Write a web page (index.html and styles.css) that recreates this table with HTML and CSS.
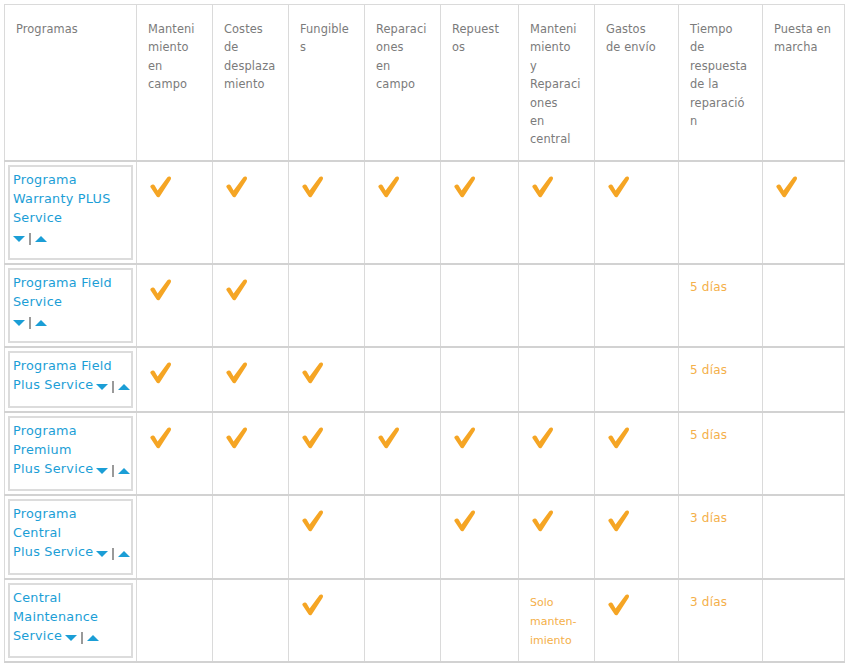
FILE: index.html
```html
<!DOCTYPE html>
<html lang="es">
<head>
<meta charset="utf-8">
<title>Programas</title>
<link rel="stylesheet" href="styles.css">
</head>
<body>
<svg width="0" height="0" class="defs">
  <defs>
    <symbol id="chk" viewBox="0 0 24 24">
      <path d="M1.8 10.4 C3.4 9 5.2 9.4 6 11 L8.6 15.4 L18.4 2.2 C19.4 0.9 21.6 1.3 22 2.8 C22.2 3.6 21.9 4.4 21.3 5.2 L10.8 21.4 C10 22.6 8.2 22.6 7.5 21.3 L1.7 12.6 C1.2 11.8 1.2 11 1.8 10.4 Z"/>
    </symbol>
  </defs>
</svg>
<table class="grid">
  <colgroup>
    <col class="c-prog"><col class="c76"><col class="c76"><col class="c76"><col class="c76"><col class="c78"><col class="c76"><col class="c84"><col class="c84"><col class="c82">
  </colgroup>
  <thead>
    <tr>
      <th>Programas</th>
      <th>Manteni<br>miento<br>en<br>campo</th>
      <th>Costes<br>de<br>desplaza<br>miento</th>
      <th>Fungible<br>s</th>
      <th>Reparaci<br>ones<br>en<br>campo</th>
      <th>Repuest<br>os</th>
      <th>Manteni<br>miento<br>y<br>Reparaci<br>ones<br>en<br>central</th>
      <th>Gastos<br>de envío</th>
      <th>Tiempo<br>de<br>respuesta<br>de la<br>reparació<br>n</th>
      <th>Puesta en<br>marcha</th>
    </tr>
  </thead>
  <tbody>
    <tr>
      <td class="prog"><div class="box"><a class="name">Programa<br>Warranty PLUS<br>Service</a><br><span class="arrows"><i class="dn"></i><i class="bar"></i><i class="up"></i></span></div></td>
      <td><svg class="ck"><use href="#chk"/></svg></td>
      <td><svg class="ck"><use href="#chk"/></svg></td>
      <td><svg class="ck"><use href="#chk"/></svg></td>
      <td><svg class="ck"><use href="#chk"/></svg></td>
      <td><svg class="ck"><use href="#chk"/></svg></td>
      <td><svg class="ck"><use href="#chk"/></svg></td>
      <td><svg class="ck"><use href="#chk"/></svg></td>
      <td></td>
      <td><svg class="ck"><use href="#chk"/></svg></td>
    </tr>
    <tr>
      <td class="prog"><div class="box"><a class="name">Programa Field<br>Service</a><br><span class="arrows"><i class="dn"></i><i class="bar"></i><i class="up"></i></span></div></td>
      <td><svg class="ck"><use href="#chk"/></svg></td>
      <td><svg class="ck"><use href="#chk"/></svg></td>
      <td></td><td></td><td></td><td></td><td></td>
      <td><span class="days">5 días</span></td>
      <td></td>
    </tr>
    <tr>
      <td class="prog"><div class="box"><a class="name">Programa Field<br><span class="nw">Plus Service<span class="arrows"><i class="dn"></i><i class="bar"></i><i class="up"></i></span></span></a></div></td>
      <td><svg class="ck"><use href="#chk"/></svg></td>
      <td><svg class="ck"><use href="#chk"/></svg></td>
      <td><svg class="ck"><use href="#chk"/></svg></td>
      <td></td><td></td><td></td><td></td>
      <td><span class="days">5 días</span></td>
      <td></td>
    </tr>
    <tr>
      <td class="prog"><div class="box"><a class="name">Programa<br>Premium<br><span class="nw">Plus Service<span class="arrows"><i class="dn"></i><i class="bar"></i><i class="up"></i></span></span></a></div></td>
      <td><svg class="ck"><use href="#chk"/></svg></td>
      <td><svg class="ck"><use href="#chk"/></svg></td>
      <td><svg class="ck"><use href="#chk"/></svg></td>
      <td><svg class="ck"><use href="#chk"/></svg></td>
      <td><svg class="ck"><use href="#chk"/></svg></td>
      <td><svg class="ck"><use href="#chk"/></svg></td>
      <td><svg class="ck"><use href="#chk"/></svg></td>
      <td><span class="days">5 días</span></td>
      <td></td>
    </tr>
    <tr>
      <td class="prog"><div class="box"><a class="name">Programa<br>Central<br><span class="nw">Plus Service<span class="arrows"><i class="dn"></i><i class="bar"></i><i class="up"></i></span></span></a></div></td>
      <td></td><td></td>
      <td><svg class="ck"><use href="#chk"/></svg></td>
      <td></td>
      <td><svg class="ck"><use href="#chk"/></svg></td>
      <td><svg class="ck"><use href="#chk"/></svg></td>
      <td><svg class="ck"><use href="#chk"/></svg></td>
      <td><span class="days">3 días</span></td>
      <td></td>
    </tr>
    <tr>
      <td class="prog"><div class="box"><a class="name">Central<br>Maintenance<br><span class="nw">Service<span class="arrows"><i class="dn"></i><i class="bar"></i><i class="up"></i></span></span></a></div></td>
      <td></td><td></td>
      <td><svg class="ck"><use href="#chk"/></svg></td>
      <td></td><td></td>
      <td><span class="note">Solo<br>manten-<br>imiento</span></td>
      <td><svg class="ck"><use href="#chk"/></svg></td>
      <td><span class="days">3 días</span></td>
      <td></td>
    </tr>
  </tbody>
</table>
</body>
</html>
```
FILE: styles.css
```css
html, body {
  margin: 0;
  padding: 0;
  background: #ffffff;
}
body {
  font-family: "DejaVu Sans", "Liberation Sans", sans-serif;
}
.defs {
  position: absolute;
  width: 0;
  height: 0;
  overflow: hidden;
}
.grid {
  margin: 4px 0 0 4px;
  border-collapse: collapse;
  table-layout: fixed;
  width: 840px;
}
.c-prog { width: 132px; }
.c76 { width: 76px; }
.c78 { width: 78px; }
.c84 { width: 84px; }
.c82 { width: 82px; }

.grid th {
  text-align: left;
  vertical-align: top;
  font-weight: normal;
  font-size: 11.4px;
  line-height: 18.4px;
  color: #7b7b7b;
  padding: 15px 4px 0 11px;
  height: 140px;
  border: 1px solid #dadada;
  border-bottom: 2px solid #d2d2d2;
  white-space: nowrap;
  letter-spacing: 0.1px;
}
.grid td {
  vertical-align: top;
  padding: 13px 8px 0 11px;
  border-left: 1px solid #dadada;
  border-right: 1px solid #dadada;
  border-bottom: 2px solid #d2d2d2;
}
.grid td.prog {
  padding: 3px 3px 3px 3px;
}
.box {
  border: 2px solid #dcdcdc;
  padding: 3px 1px 11.5px 3px;
  font-size: 12.8px;
  line-height: 19px;
  color: #1b9ed6;
  letter-spacing: 0.25px;
}
.name {
  color: #1b9ed6;
}
.nw {
  white-space: nowrap;
}
.arrows {
  display: inline-flex;
  align-items: center;
  gap: 4px;
  vertical-align: -1px;
  margin-left: 3px;
}
.box > .arrows {
  margin-left: 0;
}
.dn {
  width: 0;
  height: 0;
  border-left: 6px solid transparent;
  border-right: 6px solid transparent;
  border-top: 6px solid #1b9ed6;
}
.up {
  width: 0;
  height: 0;
  border-left: 6px solid transparent;
  border-right: 6px solid transparent;
  border-bottom: 6px solid #1b9ed6;
}
.bar {
  width: 2px;
  height: 12px;
  background: #9a9a9a;
}
.ck {
  display: block;
  width: 24px;
  height: 24px;
  margin-left: 1px;
  fill: #f5a524;
}
.days {
  display: block;
  font-size: 12px;
  line-height: 18px;
  color: #f4b04a;
  letter-spacing: 0.2px;
}
.note {
  display: block;
  font-size: 11px;
  line-height: 19px;
  color: #f4b04a;
}
```
